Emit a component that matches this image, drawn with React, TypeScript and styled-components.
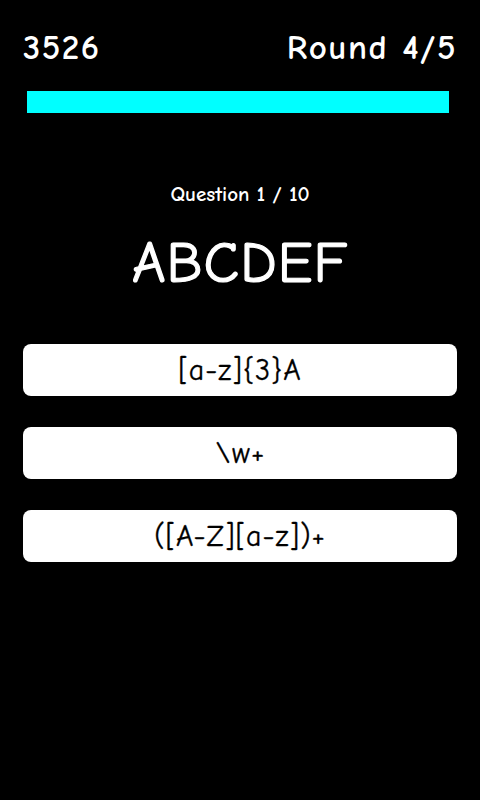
import React from 'react';
import styled, { createGlobalStyle } from 'styled-components';

const GlobalStyle = createGlobalStyle`
  html, body {
    margin: 0;
    padding: 0;
    background: #000;
  }
  body {
    font-family: "Comic Sans MS", "Comic Neue", "DejaVu Sans", sans-serif;
  }
`;

const Screen = styled.div`
  width: 480px;
  height: 800px;
  box-sizing: border-box;
  background: #000;
  color: #fff;
  padding: 26px 23px 0;
  display: flex;
  flex-direction: column;
`;

const Header = styled.div`
  display: flex;
  justify-content: space-between;
  align-items: center;
  height: 44px;
`;

const HeaderText = styled.span`
  font-size: 35px;
  font-weight: bold;
  line-height: 44px;
  letter-spacing: 1.5px;
`;

const ProgressTrack = styled.div`
  margin: 21px 8px 0 4px;
  height: 22px;
  background: #000;
`;

const ProgressFill = styled.div`
  height: 100%;
  background: #00ffff;
`;

const QuestionLabel = styled.div`
  margin-top: 68px;
  text-align: center;
  font-size: 21px;
  font-weight: bold;
  line-height: 26px;
`;

const Prompt = styled.div`
  margin-top: 27px;
  text-align: center;
  font-size: 58px;
  line-height: 60px;
  letter-spacing: 1px;
  -webkit-text-stroke: 1.2px #fff;
`;

const Answers = styled.div`
  margin-top: 50px;
  display: flex;
  flex-direction: column;
  gap: 31px;
`;

const AnswerButton = styled.button`
  height: 52px;
  border: none;
  border-radius: 8px;
  background: #fff;
  color: #000;
  font-family: inherit;
  font-size: 30px;
  letter-spacing: 1px;
  -webkit-text-stroke: 0.3px #000;
  padding: 0;
  cursor: pointer;
`;

const answers = ['[a-z]{3}A', '\\w+', '([A-Z][a-z])+'];

export default function App() {
  const progress = 100;
  return (
    <>
      <GlobalStyle />
      <Screen>
        <Header>
          <HeaderText>3526</HeaderText>
          <HeaderText>Round 4/5</HeaderText>
        </Header>
        <ProgressTrack>
          <ProgressFill style={{ width: `${progress}%` }} />
        </ProgressTrack>
        <QuestionLabel>Question 1 / 10</QuestionLabel>
        <Prompt>ABCDEF</Prompt>
        <Answers>
          {answers.map((a) => (
            <AnswerButton key={a}>{a}</AnswerButton>
          ))}
        </Answers>
      </Screen>
    </>
  );
}
